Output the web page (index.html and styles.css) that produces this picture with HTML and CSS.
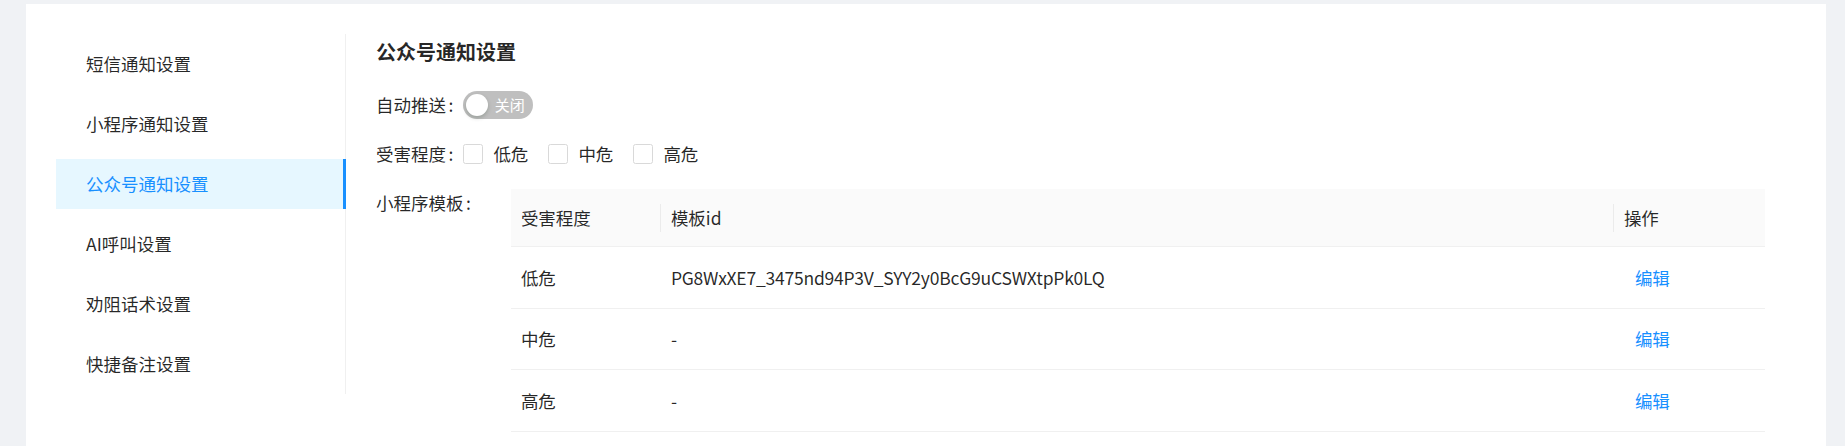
FILE: index.html
```html
<!DOCTYPE html>
<html lang="zh-CN">
<head>
<meta charset="utf-8">
<title>公众号通知设置</title>
<link rel="stylesheet" href="styles.css">
</head>
<body>
<div class="page">
  <div class="card">
    <nav class="menu">
      <div class="menu-item">短信通知设置</div>
      <div class="menu-item">小程序通知设置</div>
      <div class="menu-item active">公众号通知设置</div>
      <div class="menu-item">AI呼叫设置</div>
      <div class="menu-item">劝阻话术设置</div>
      <div class="menu-item">快捷备注设置</div>
    </nav>
    <main class="content">
      <h2 class="title">公众号通知设置</h2>
      <div class="form-row">
        <label class="label">自动推送<span class="colon">:</span></label>
        <button class="switch" type="button"><span class="knob"></span><span class="switch-text">关闭</span></button>
      </div>
      <div class="form-row">
        <label class="label">受害程度<span class="colon">:</span></label>
        <div class="checks">
          <label class="check"><span class="box"></span><span class="check-text">低危</span></label>
          <label class="check"><span class="box"></span><span class="check-text">中危</span></label>
          <label class="check"><span class="box"></span><span class="check-text">高危</span></label>
        </div>
      </div>
      <div class="form-row form-row-table">
        <label class="label">小程序模板<span class="colon">:</span></label>
        <table class="table">
          <colgroup><col class="col-level"><col class="col-id"><col class="col-op"></colgroup>
          <thead>
            <tr><th>受害程度</th><th>模板id</th><th>操作</th></tr>
          </thead>
          <tbody>
            <tr><td>低危</td><td class="id">PG8WxXE7_3475nd94P3V_SYY2y0BcG9uCSWXtpPk0LQ</td><td><a class="link">编辑</a></td></tr>
            <tr><td>中危</td><td class="id">-</td><td><a class="link">编辑</a></td></tr>
            <tr><td>高危</td><td class="id">-</td><td><a class="link">编辑</a></td></tr>
          </tbody>
        </table>
      </div>
    </main>
  </div>
</div>
</body>
</html>
```
FILE: styles.css
```css
* { box-sizing: border-box; }
html, body { margin: 0; padding: 0; }
body {
  background: #f0f2f5;
  font-family: "Noto Sans CJK SC", "Noto Sans", sans-serif;
  font-size: 17.5px;
  color: rgba(0, 0, 0, 0.85);
  overflow: hidden;
}
.page {
  padding: 4px 19px 0 26px;
  height: 446px;
}
.card {
  background: #fff;
  height: 100%;
  padding: 30px;
  display: flex;
  align-items: flex-start;
}
.menu {
  width: 290px;
  flex: none;
  display: flex;
  flex-direction: column;
  border-right: 1px solid #f0f0f0;
  padding: 0;
}
.menu-item {
  height: 50px;
  line-height: 50px;
  margin: 5px -1px 5px 0;
  padding-left: 30px;
  white-space: nowrap;
}
.menu-item.active {
  background: #e6f7ff;
  color: #1890ff;
  border-right: 3px solid #1890ff;
}
.content {
  flex: 1;
  padding-left: 30px;
}
.title {
  margin: 4px 0 25px;
  font-size: 20px;
  line-height: 28px;
  font-weight: 700;
  color: rgba(0, 0, 0, 0.85);
}
.form-row {
  display: flex;
  align-items: center;
  height: 27.5px;
  margin-bottom: 21.5px;
}
.form-row-table {
  align-items: flex-start;
  height: auto;
  margin-bottom: 0;
}
.label {
  line-height: 27.5px;
  white-space: nowrap;
}
.colon {
  margin: 0 10px 0 2.5px;
}
.switch {
  position: relative;
  display: inline-flex;
  align-items: center;
  height: 27.5px;
  min-width: 70px;
  padding: 0 8.75px 0 31.25px;
  border: 0;
  border-radius: 14px;
  background: #bfbfbf;
  font-family: inherit;
}
.knob {
  position: absolute;
  top: 2.5px;
  left: 2.5px;
  width: 22.5px;
  height: 22.5px;
  border-radius: 50%;
  background: #fff;
  box-shadow: 0 2px 4px 0 rgba(0, 35, 11, 0.2);
}
.switch-text {
  color: #fff;
  font-size: 15px;
  line-height: 27.5px;
}
.checks {
  display: flex;
  align-items: center;
}
.check {
  display: inline-flex;
  align-items: center;
  margin-right: 10px;
}
.box {
  width: 20px;
  height: 20px;
  border: 1px solid #d9d9d9;
  border-radius: 2.5px;
  background: #fff;
}
.check-text {
  padding: 0 10px;
  line-height: 27.5px;
}
.table {
  margin-left: 30px;
  width: 1254px;
  border-collapse: collapse;
  table-layout: fixed;
}
.col-level { width: 150px; }
.col-op { width: 151px; }
.table th {
  position: relative;
  background: #fafafa;
  font-weight: 400;
  text-align: left;
  padding: 15px 10px;
  line-height: 27px;
  border-bottom: 1px solid #f0f0f0;
}
.table th:not(:last-child)::before {
  content: "";
  position: absolute;
  right: 0;
  top: 50%;
  width: 1px;
  height: 28px;
  transform: translateY(-50%);
  background: rgba(0, 0, 0, 0.06);
}
.table td {
  padding: 16.5px 10px;
  line-height: 27.5px;
  border-bottom: 1px solid #f0f0f0;
  white-space: nowrap;
}
.table td.id {
  letter-spacing: -0.22px;
}
.link {
  color: #1890ff;
  padding-left: 11px;
  cursor: pointer;
}
```
